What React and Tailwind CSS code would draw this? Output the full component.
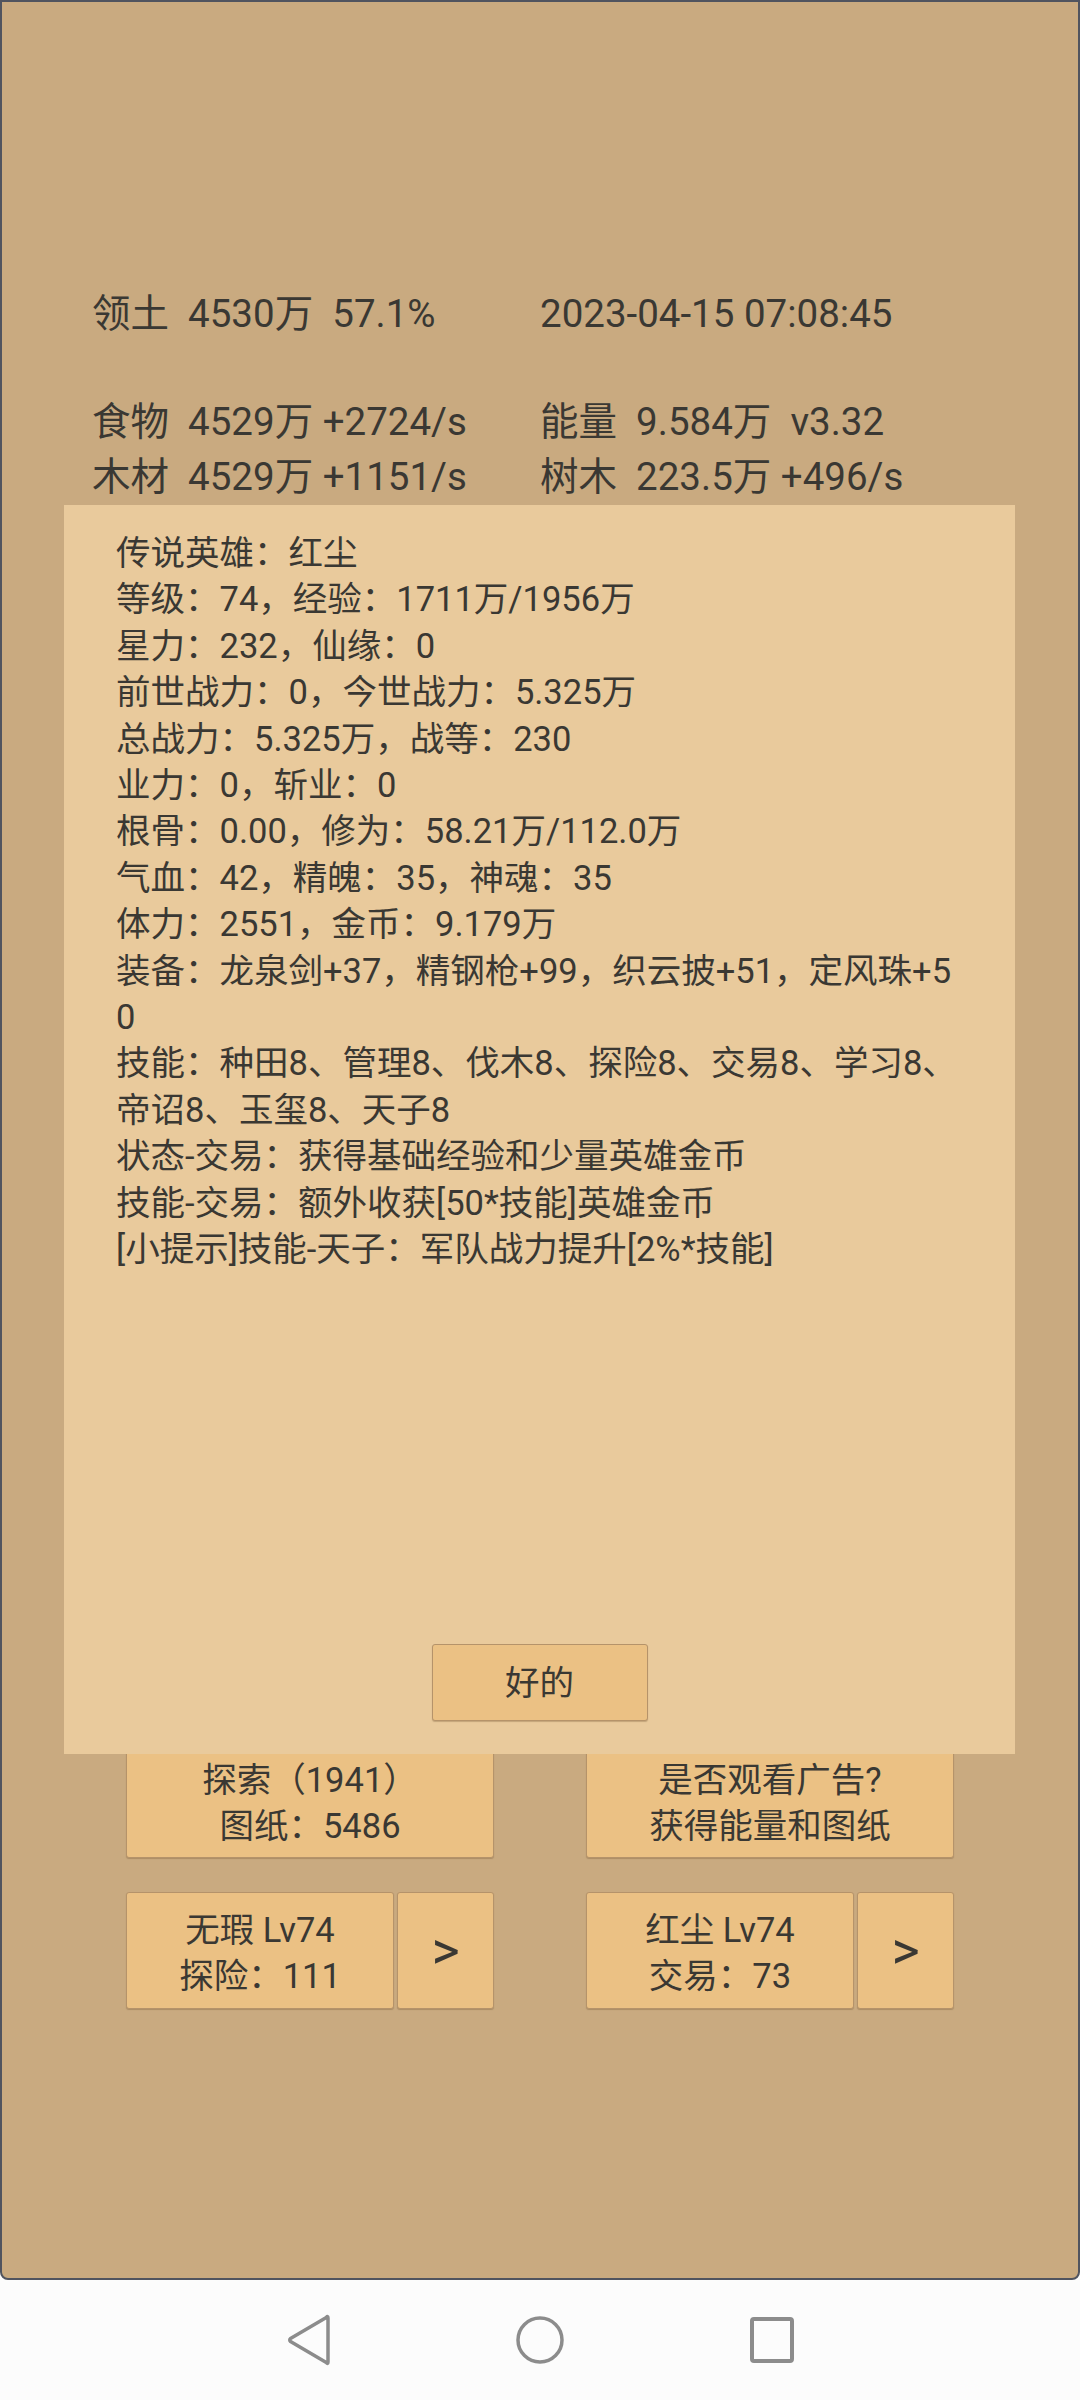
import React from "react";

const FONT = { fontFamily: 'Roboto, "Noto Sans CJK SC", sans-serif' };

function Btn({ className = "", children }) {
  return (
    <div
      className={
        "flex flex-col items-center justify-center rounded-[3px] border border-[#b5936a] bg-[#ebc184] shadow-[0_1px_1px_rgba(80,50,20,0.25)] text-[34.5px] leading-[46px] text-[#3a3833] " +
        className
      }
    >
      {children}
    </div>
  );
}

const dialogLines = [
  "传说英雄：红尘",
  "等级：74，经验：1711万/1956万",
  "星力：232，仙缘：0",
  "前世战力：0，今世战力：5.325万",
  "总战力：5.325万，战等：230",
  "业力：0，斩业：0",
  "根骨：0.00，修为：58.21万/112.0万",
  "气血：42，精魄：35，神魂：35",
  "体力：2551，金币：9.179万",
  "装备：龙泉剑+37，精钢枪+99，织云披+51，定风珠+5",
  "0",
  "技能：种田8、管理8、伐木8、探险8、交易8、学习8、",
  "帝诏8、玉玺8、天子8",
  "状态-交易：获得基础经验和少量英雄金币",
  "技能-交易：额外收获[50*技能]英雄金币",
  "[小提示]技能-天子：军队战力提升[2%*技能]",
];

export default function App() {
  return (
    <div className="w-[1080px] h-[2400px] flex flex-col bg-[#fcfcfc]" style={FONT}>
      {/* game frame */}
      <div className="relative h-[2280px] bg-[#c9aa80] border-2 border-[#50545f] rounded-b-[8px] text-[#3a3833]">
        {/* stats */}
        <div className="pt-[284px] pl-[90px] text-[38.5px] leading-[55px] whitespace-pre">
          <div className="grid grid-cols-[448px_1fr]">
            <div>领土  4530万  57.1%</div>
            <div>2023-04-15 07:08:45</div>
          </div>
          <div className="grid grid-cols-[448px_1fr] mt-[53px]">
            <div>食物  4529万 +2724/s</div>
            <div>能量  9.584万  v3.32</div>
            <div>木材  4529万 +1151/s</div>
            <div>树木  223.5万 +496/s</div>
          </div>
        </div>

        {/* bottom buttons */}
        <div className="mt-[1237px] pl-[124px] grid grid-cols-[368px_368px] gap-x-[92px] gap-y-[34px]">
          <Btn className="h-[117px] pt-[6px]">
            <div>探索（1941）</div>
            <div>图纸：5486</div>
          </Btn>
          <Btn className="h-[117px] pt-[6px]">
            <div>是否观看广告?</div>
            <div>获得能量和图纸</div>
          </Btn>
          <div className="flex gap-[3px] h-[117px]">
            <Btn className="w-[268px] pt-[4px]">
              <div>无瑕 Lv74</div>
              <div>探险：111</div>
            </Btn>
            <Btn className="flex-1">
              <div className="text-[54px] leading-[60px]">&gt;</div>
            </Btn>
          </div>
          <div className="flex gap-[3px] h-[117px]">
            <Btn className="w-[268px] pt-[4px]">
              <div>红尘 Lv74</div>
              <div>交易：73</div>
            </Btn>
            <Btn className="flex-1">
              <div className="text-[54px] leading-[60px]">&gt;</div>
            </Btn>
          </div>
        </div>

        {/* dialog overlay */}
        <div className="absolute left-[62px] top-[503px] w-[951px] h-[1249px] bg-[#e9ca9c] flex flex-col pl-[52px] pt-[25px] pb-[33px]">
          <div className="text-[34.5px] leading-[46.4px] text-[#3a3833] whitespace-nowrap">
            {dialogLines.map((l, i) => (
              <div key={i}>{l}</div>
            ))}
          </div>
          <div className="mt-auto flex justify-center pr-[52px]">
            <Btn className="w-[216px] h-[77px]">
              <div>好的</div>
            </Btn>
          </div>
        </div>
      </div>

      {/* nav bar */}
      <div className="h-[120px] flex items-center justify-center gap-[182px]">
        <svg width="48" height="52" viewBox="0 0 48 52" fill="none">
          <path
            d="M44 4 L44 48 Q44 50.5 42.3 48.6 L6.5 27.5 Q5 26 6.5 24.5 L42.3 3.4 Q44 1.5 44 4 Z"
            stroke="#8c8c8c"
            strokeWidth="3.5"
            strokeLinejoin="round"
          />
        </svg>
        <svg width="52" height="52" viewBox="0 0 52 52" fill="none">
          <circle cx="26" cy="26" r="22" stroke="#8c8c8c" strokeWidth="3.5" />
        </svg>
        <svg width="48" height="52" viewBox="0 0 48 52" fill="none">
          <rect x="4" y="5" width="40" height="42" rx="2" stroke="#8c8c8c" strokeWidth="4" />
        </svg>
      </div>
    </div>
  );
}
